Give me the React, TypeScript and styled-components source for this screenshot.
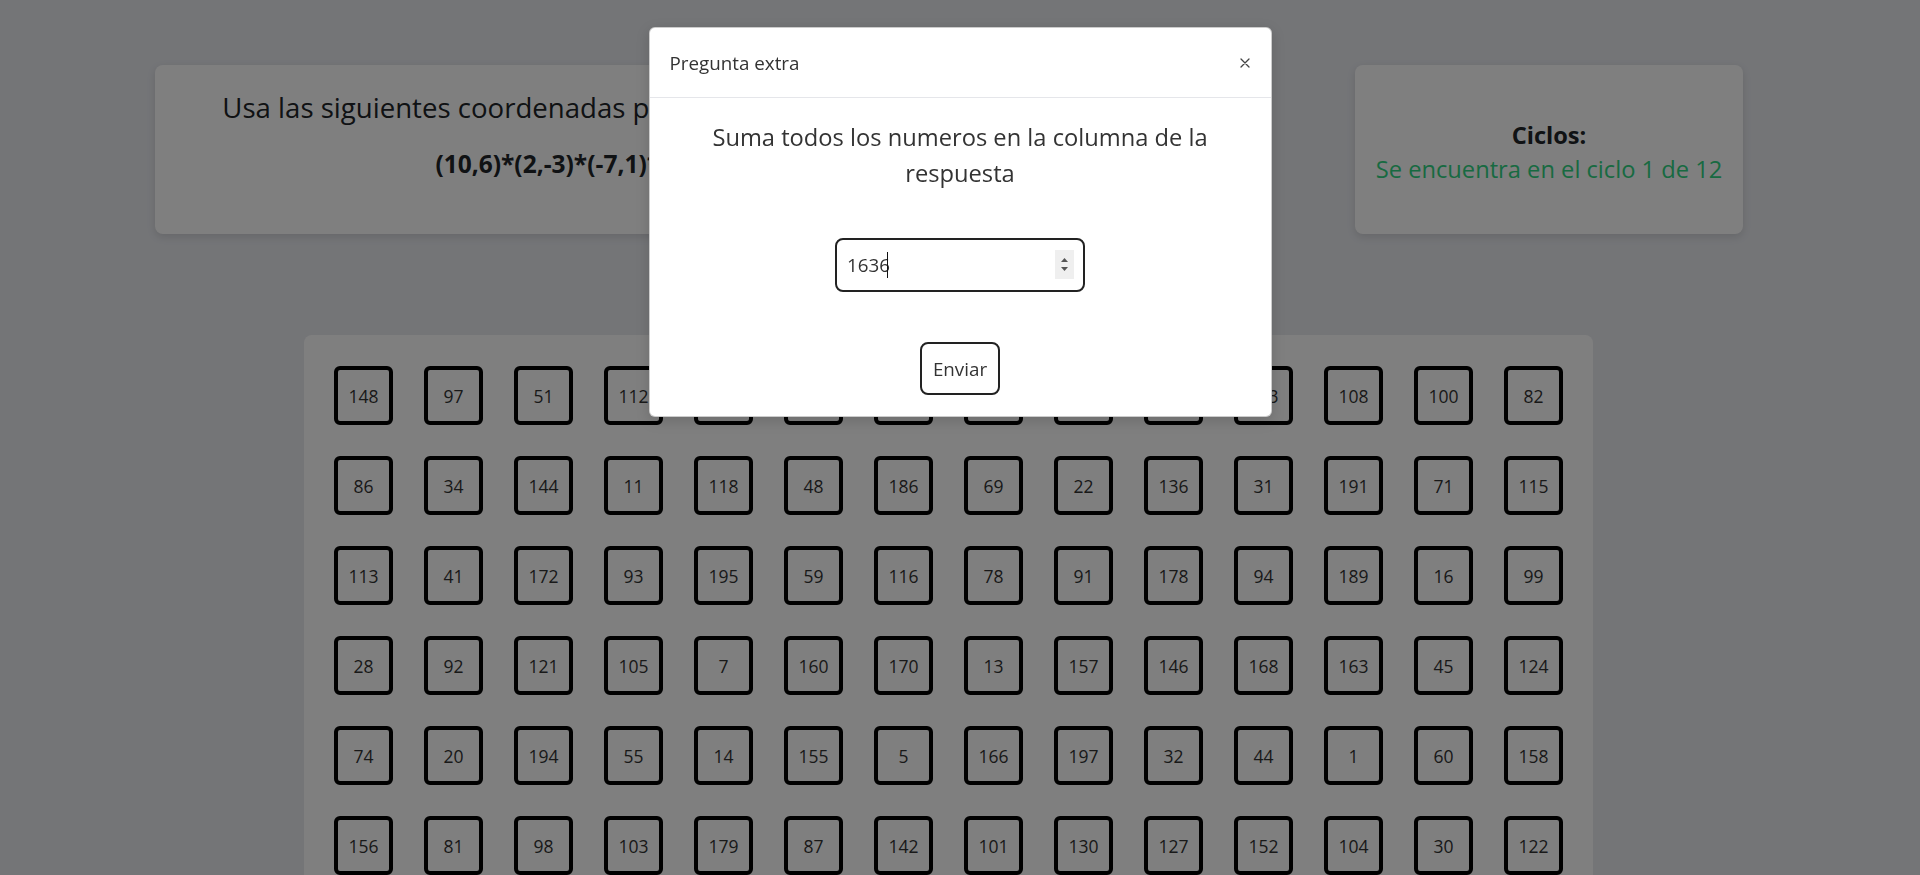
import { useEffect, useRef } from 'react';
import styled, { createGlobalStyle } from 'styled-components';

const FONT = `"Open Sans", "Noto Sans", "Liberation Sans", sans-serif`;

const ROWS: number[][] = [
  [148, 97, 51, 112, 65, 9, 183, 39, 134, 176, 123, 108, 100, 82],
  [86, 34, 144, 11, 118, 48, 186, 69, 22, 136, 31, 191, 71, 115],
  [113, 41, 172, 93, 195, 59, 116, 78, 91, 178, 94, 189, 16, 99],
  [28, 92, 121, 105, 7, 160, 170, 13, 157, 146, 168, 163, 45, 124],
  [74, 20, 194, 55, 14, 155, 5, 166, 197, 32, 44, 1, 60, 158],
  [156, 81, 98, 103, 179, 87, 142, 101, 130, 127, 152, 104, 30, 122],
];

// filas de abajo: se rellenan con los números que faltan
const buildBoard = () => {
  const used = new Set(ROWS.flat());
  const rest: number[] = [];
  for (let n = 1; n <= 200; n++) if (!used.has(n)) rest.push(n);
  let seed = 7;
  for (let i = rest.length - 1; i > 0; i--) {
    seed = (seed * 9301 + 49297) % 233280;
    const j = seed % (i + 1);
    [rest[i], rest[j]] = [rest[j], rest[i]];
  }
  return [...ROWS.flat(), ...rest.slice(0, 14 * 8)];
};

const GlobalStyle = createGlobalStyle`
  html, body {
    margin: 0;
    padding: 0;
    background: #e8eaef;
    font-family: ${FONT};
    color: #212529;
    overflow: hidden;
  }
  * { box-sizing: border-box; }
`;

export default function App() {
  const board = buildBoard();
  const inputRef = useRef<HTMLInputElement>(null);

  useEffect(() => {
    const el = inputRef.current;
    if (!el) return;
    el.focus();
    el.setSelectionRange(el.value.length, el.value.length);
  }, []);

  return (
    <>
      <GlobalStyle />
      <Page>
        <TopRow>
          <CoordCard>
            <Instruction>
              Usa las siguientes coordenadas para encontrar la respuesta
            </Instruction>
            <Coords>(10,6)*(2,-3)*(-7,1)*(5,2)*(3,4)</Coords>
          </CoordCard>
          <CycleCard>
            <CycleTitle>Ciclos:</CycleTitle>
            <CycleText>Se encuentra en el ciclo 1 de 12</CycleText>
          </CycleCard>
        </TopRow>
        <Board>
          {board.map((n, i) => (
            <Cell key={i}>{n}</Cell>
          ))}
        </Board>
      </Page>

      <Backdrop />
      <ModalWrap>
        <Modal>
          <ModalHeader>
            <ModalTitle>Pregunta extra</ModalTitle>
            <CloseButton aria-label="Cerrar">
              <svg width="10" height="10" viewBox="0 0 10 10">
                <path
                  d="M1 1L9 9M9 1L1 9"
                  stroke="#444"
                  strokeWidth="1.3"
                  strokeLinecap="round"
                />
              </svg>
            </CloseButton>
          </ModalHeader>
          <ModalBody>
            <Question>Suma todos los numeros en la columna de la respuesta</Question>
            <InputWrap>
              <AnswerInput
                ref={inputRef}
                type="text"
                inputMode="numeric"
                defaultValue="1636"
              />
              <Caret />
              <Spinner>
                <svg width="19" height="29" viewBox="0 0 19 29">
                  <path d="M6 12L9.5 8L13 12Z" fill="#555" />
                  <path d="M6 17L9.5 21L13 17Z" fill="#555" />
                </svg>
              </Spinner>
            </InputWrap>
            <SendButton>Enviar</SendButton>
          </ModalBody>
        </Modal>
      </ModalWrap>
    </>
  );
}

const Page = styled.div`
  width: 1920px;
  min-height: 875px;
`;

const TopRow = styled.div`
  display: flex;
  justify-content: space-between;
  padding: 65px 177px 0 155px;
`;

const Card = styled.div`
  height: 169px;
  background: #fff;
  border-radius: 8px;
  box-shadow: 0 3px 8px rgba(0, 0, 0, 0.12);
`;

const CoordCard = styled(Card)`
  width: 902px;
  padding: 25px 10px 0;
  text-align: center;
`;

const Instruction = styled.h3`
  margin: 0 0 24px;
  font-size: 27.6px;
  font-weight: 400;
  line-height: 35px;
  white-space: nowrap;
`;

const Coords = styled.h4`
  margin: 0;
  font-size: 24.5px;
  font-weight: 700;
  line-height: 30px;
`;

const CycleCard = styled(Card)`
  width: 388px;
  padding-top: 5px;
  display: flex;
  flex-direction: column;
  align-items: center;
  justify-content: center;
  text-align: center;
`;

const CycleTitle = styled.div`
  font-size: 23.6px;
  font-weight: 700;
  line-height: 34px;
`;

const CycleText = styled.div`
  font-size: 23.7px;
  line-height: 34px;
  color: #30d483;
`;

const Board = styled.div`
  margin: 101px 0 0 304px;
  width: 1289px;
  padding: 31px 30px;
  background: #fff;
  border-radius: 8px 8px 0 0;
  display: grid;
  grid-template-columns: repeat(14, 59px);
  gap: 31px;
`;

const Cell = styled.div`
  width: 59px;
  height: 59px;
  border: 4px solid #000;
  border-radius: 6px;
  display: flex;
  align-items: center;
  justify-content: center;
  font-size: 17.5px;
  color: #333;
`;

const Backdrop = styled.div`
  position: fixed;
  inset: 0;
  background: rgba(0, 0, 0, 0.5);
`;

const ModalWrap = styled.div`
  position: fixed;
  inset: 0;
  display: flex;
  justify-content: center;
  align-items: flex-start;
  padding-top: 27px;
`;

const Modal = styled.div`
  width: 623px;
  background: #fff;
  border: 1px solid rgba(0, 0, 0, 0.2);
  border-radius: 6px;
  box-shadow: 0 4px 14px rgba(0, 0, 0, 0.15);
`;

const ModalHeader = styled.div`
  height: 70px;
  display: flex;
  align-items: center;
  justify-content: space-between;
  padding: 0 21px 0 20px;
  border-bottom: 1px solid #e5e6ea;
`;

const ModalTitle = styled.h5`
  margin: 0;
  font-size: 18.8px;
  font-weight: 400;
  color: #333;
`;

const CloseButton = styled.button`
  border: none;
  background: none;
  padding: 0;
  display: flex;
  cursor: pointer;
`;

const ModalBody = styled.div`
  padding: 21px 16px 21px;
  display: flex;
  flex-direction: column;
  align-items: center;
`;

const Question = styled.p`
  margin: 0;
  font-size: 23.7px;
  line-height: 36px;
  color: #333;
  text-align: center;
`;

const InputWrap = styled.div`
  position: relative;
  width: 250px;
  margin-top: 47px;
`;

const AnswerInput = styled.input`
  width: 100%;
  height: 54px;
  border: 2px solid #222;
  border-radius: 8px;
  padding: 0 40px 0 10px;
  font-family: ${FONT};
  font-size: 18.8px;
  color: #333;
  outline: none;
  caret-color: transparent;
`;

const Caret = styled.span`
  position: absolute;
  left: 52px;
  top: 14px;
  width: 1px;
  height: 26px;
  background: #111;
`;

const Spinner = styled.div`
  position: absolute;
  right: 11px;
  top: 12px;
  width: 19px;
  height: 29px;
  background: #efefef;
  display: flex;
`;

const SendButton = styled.button`
  margin-top: 50px;
  height: 53px;
  padding: 0 11px;
  border: 2px solid #222;
  border-radius: 8px;
  background: #fff;
  font-family: ${FONT};
  font-size: 18.8px;
  color: #333;
  cursor: pointer;
`;
